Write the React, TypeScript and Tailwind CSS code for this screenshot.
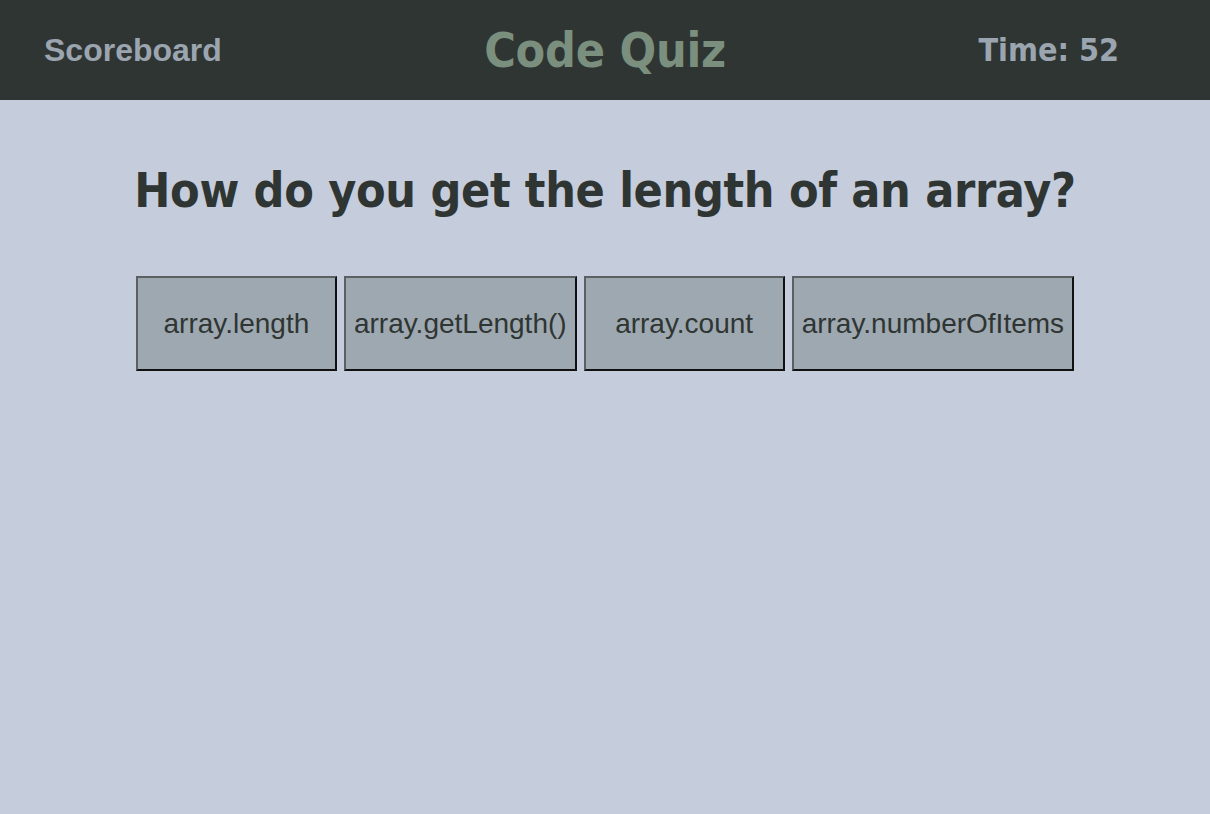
const choices = ["array.length", "array.getLength()", "array.count", "array.numberOfItems"];

export default function App() {
  return (
    <div className="min-h-[814px] bg-[#c5ccdb]">
      <header className="grid h-[100px] grid-cols-[1fr_auto_1fr] items-center bg-[#2f3533] px-[44px]">
        <a className="justify-self-start font-['Liberation_Sans',Arial,sans-serif] text-[32px] font-bold text-[#9ba5b0]">
          Scoreboard
        </a>
        <h1 className="font-['DejaVu_Sans_Condensed','DejaVu_Sans',sans-serif] text-[48px] font-bold tracking-[-0.25px] text-[#7a8f7d]">
          Code Quiz
        </h1>
        <div className="mr-[47px] justify-self-end font-['DejaVu_Sans_Condensed','DejaVu_Sans',sans-serif] text-[32px] font-bold text-[#9ba5b0]">
          Time: 52
        </div>
      </header>

      <main className="flex flex-col items-center pt-[58px]">
        <h2 className="font-['DejaVu_Sans_Condensed','DejaVu_Sans',sans-serif] text-[48px] leading-[64px] font-bold tracking-[-0.35px] text-[#2f3533]">
          How do you get the length of an array?
        </h2>
        <div className="mt-[54px] flex justify-center gap-[7px]">
          {choices.map((choice) => (
            <button
              key={choice}
              className="h-[95px] min-w-[201px] border-2 border-t-[#5c6063] border-l-[#5c6063] border-r-[#111] border-b-[#111] bg-[#9ea8b0] px-[8px] font-['Liberation_Sans',Arial,sans-serif] text-[28px] text-[#2f3533]"
            >
              {choice}
            </button>
          ))}
        </div>
      </main>
    </div>
  );
}
